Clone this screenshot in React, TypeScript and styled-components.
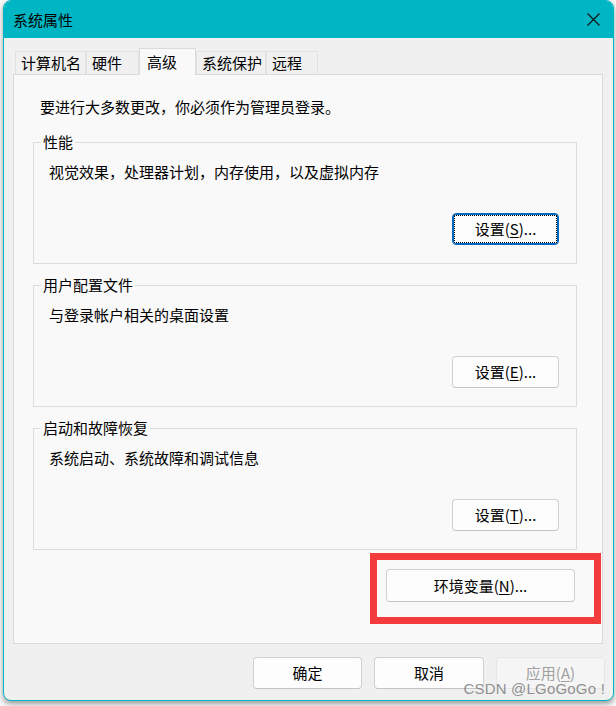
import React from "react";
import styled, { createGlobalStyle } from "styled-components";

const GlobalStyle = createGlobalStyle`
  html, body {
    margin: 0;
    padding: 0;
    background: #f6f6f6;
  }
  body {
    width: 616px;
    height: 706px;
    overflow: hidden;
    font-family: "Noto Sans CJK SC", "Noto Sans", sans-serif;
    font-size: 15px;
    color: #000;
  }
`;

const Window = styled.div`
  position: relative;
  box-sizing: border-box;
  width: 611px;
  height: 701px;
  margin-left: 3px;
  border: 1px solid #00b6c4;
  border-radius: 8px;
  background: #f0f0f0;
  overflow: hidden;
  box-shadow: 0 3px 5px rgba(0, 0, 0, 0.35);
  display: flex;
  flex-direction: column;
`;

const TitleBar = styled.div`
  height: 37px;
  flex-shrink: 0;
  background: #00b6c4;
  display: flex;
  align-items: center;
  justify-content: space-between;
  padding: 0 13px 0 9px;
  line-height: 20px;
`;

const CloseIcon = () => (
  <svg width="13" height="13" viewBox="0 0 13 13">
    <path d="M0.5 0.5 L12.5 12.5 M12.5 0.5 L0.5 12.5" stroke="#111" strokeWidth="1.1" fill="none" />
  </svg>
);

const Body = styled.div`
  padding: 10px 10px 0 9px;
  display: flex;
  flex-direction: column;
`;

const TabStrip = styled.div`
  height: 26px;
  display: flex;
  align-items: flex-end;
  padding-left: 2px;
`;

const Tab = styled.div<{ $w: number; $active?: boolean }>`
  box-sizing: border-box;
  width: ${(p) => p.$w}px;
  height: ${(p) => (p.$active ? 27 : 23)}px;
  margin-bottom: ${(p) => (p.$active ? -1 : 0)}px;
  padding-left: ${(p) => (p.$active ? 7 : 5)}px;
  display: flex;
  align-items: center;
  background: ${(p) => (p.$active ? "#f9f9f9" : "#f0f0f0")};
  border: 1px solid ${(p) => (p.$active ? "#dadada" : "#e2e2e2")};
  border-bottom: none;
  line-height: 20px;
  white-space: nowrap;
  position: relative;
  z-index: ${(p) => (p.$active ? 1 : 0)};
`;

const Panel = styled.div`
  box-sizing: border-box;
  width: 590px;
  height: 570px;
  border: 1px solid #d9d9d9;
  background: #f9f9f9;
  padding: 22px 25px 0 19px;
  display: flex;
  flex-direction: column;
`;

const Intro = styled.div`
  line-height: 20px;
  margin: 0 0 15px 7px;
`;

const Group = styled.fieldset`
  margin: 0 0 11px 0;
  padding: 10px 17px 18px 15px;
  border: 1px solid #dcdcdc;
  min-width: 0;
  display: flex;
  flex-direction: column;

  &:last-of-type {
    margin-bottom: 0;
  }
`;

const Legend = styled.legend`
  margin-left: -8px;
  padding: 0 2px;
  line-height: 20px;
`;

const Desc = styled.div`
  line-height: 20px;
`;

const ButtonRow = styled.div<{ $top?: number }>`
  display: flex;
  justify-content: flex-end;
  margin-top: ${(p) => p.$top ?? 0}px;
`;

const Button = styled.button<{ $w: number; $h?: number; $focused?: boolean }>`
  position: relative;
  box-sizing: border-box;
  width: ${(p) => p.$w}px;
  height: ${(p) => p.$h ?? 32}px;
  padding: 0;
  font-family: "Noto Sans CJK SC", "Noto Sans", sans-serif;
  font-size: 15px;
  line-height: 20px;
  color: #000;
  background: #fdfdfd;
  border: 1px solid ${(p) => (p.$focused ? "#0067c0" : "#d0d0d0")};
  border-bottom-color: ${(p) => (p.$focused ? "#0067c0" : "#c4c4c4")};
  border-radius: 4px;
  box-shadow: ${(p) => (p.$focused ? "inset 0 0 0 1px #0067c0" : "none")};
  cursor: default;

  &::after {
    content: "";
    display: ${(p) => (p.$focused ? "block" : "none")};
    position: absolute;
    inset: 1px;
    border: 1px dotted #000;
  }

  &:disabled {
    color: #a0a0a0;
    background: #f5f5f5;
    border-color: #e6e6e6;
  }

  u {
    text-underline-offset: 2px;
  }
`;

const Highlight = styled.div`
  border: 7px solid #f33b3b;
  padding: 9px 19px 15px 9px;
  margin: 3px -24px 0 0;
`;

const Footer = styled.div`
  display: flex;
  justify-content: flex-end;
  gap: 12px;
  margin: 13px -2px 0 0;
`;

const Watermark = styled.div`
  position: absolute;
  right: 8px;
  bottom: 3px;
  font-family: "Liberation Sans", Arial, sans-serif;
  font-size: 15px;
  line-height: 16px;
  color: rgba(110, 110, 110, 0.75);
  letter-spacing: 0.2px;
  pointer-events: none;
`;

const tabs = [
  { label: "计算机名", w: 71 },
  { label: "硬件", w: 53 },
  { label: "高级", w: 57, active: true },
  { label: "系统保护", w: 70 },
  { label: "远程", w: 52 },
];

const groups = [
  { title: "性能", desc: "视觉效果，处理器计划，内存使用，以及虚拟内存", key: "S", focused: true },
  { title: "用户配置文件", desc: "与登录帐户相关的桌面设置", key: "E" },
  { title: "启动和故障恢复", desc: "系统启动、系统故障和调试信息", key: "T" },
];

export default function App() {
  return (
    <>
      <GlobalStyle />
      <Window>
        <TitleBar>
          <span>系统属性</span>
          <CloseIcon />
        </TitleBar>
        <Body>
          <TabStrip>
            {tabs.map((t) => (
              <Tab key={t.label} $w={t.w} $active={t.active}>
                {t.label}
              </Tab>
            ))}
          </TabStrip>
          <Panel>
            <Intro>要进行大多数更改，你必须作为管理员登录。</Intro>
            {groups.map((g) => (
              <Group key={g.title}>
                <Legend>{g.title}</Legend>
                <Desc>{g.desc}</Desc>
                <ButtonRow $top={31}>
                  <Button $w={107} $focused={g.focused}>
                    设置(<u>{g.key}</u>)...
                  </Button>
                </ButtonRow>
              </Group>
            ))}
            <ButtonRow>
              <Highlight>
                <Button $w={189} $h={33}>
                  环境变量(<u>N</u>)...
                </Button>
              </Highlight>
            </ButtonRow>
          </Panel>
          <Footer>
            <Button $w={109}>确定</Button>
            <Button $w={110}>取消</Button>
            <Button $w={109} disabled>
              应用(<u>A</u>)
            </Button>
          </Footer>
        </Body>
        <Watermark>CSDN @LGoGoGo !</Watermark>
      </Window>
    </>
  );
}
